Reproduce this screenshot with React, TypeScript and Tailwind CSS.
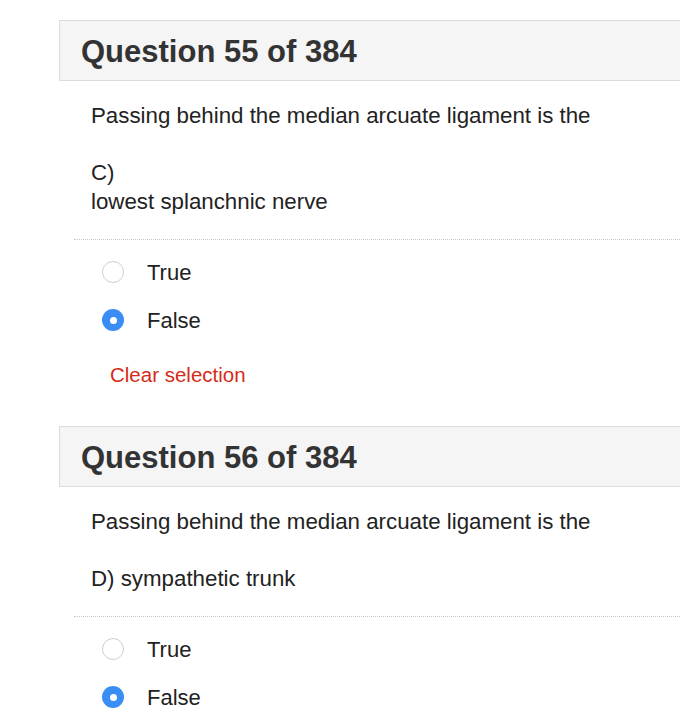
import React from "react";

type Question = {
  number: number;
  total: number;
  stem: string;
  option: React.ReactNode;
  answer: "True" | "False";
  showClear: boolean;
};

const questions: Question[] = [
  {
    number: 55,
    total: 384,
    stem: "Passing behind the median arcuate ligament is the",
    option: (
      <>
        C)
        <br />
        lowest splanchnic nerve
      </>
    ),
    answer: "False",
    showClear: true,
  },
  {
    number: 56,
    total: 384,
    stem: "Passing behind the median arcuate ligament is the",
    option: <>D) sympathetic trunk</>,
    answer: "False",
    showClear: false,
  },
];

function Radio({ checked }: { checked: boolean }) {
  if (checked) {
    return (
      <span className="flex h-[22px] w-[22px] items-center justify-center rounded-full bg-[#3a8ef3]">
        <span className="h-[7px] w-[7px] rounded-full bg-white" />
      </span>
    );
  }
  return <span className="block h-[22px] w-[22px] rounded-full border border-[#cfcfcf] bg-white" />;
}

function QuestionBlock({ q }: { q: Question }) {
  return (
    <div className="mb-[37px]">
      <div className="flex h-[61px] w-[700px] items-center border border-[#dcdcdc] bg-[#f5f5f5] pt-[3px] pl-[21px]">
        <h2 className="text-[31px] font-bold text-[#333]">
          Question {q.number} of {q.total}
        </h2>
      </div>

      <div className="pt-[20px] pl-[32px] text-[22.3px] leading-[29px] text-[#222]">
        <p>{q.stem}</p>
        <p className="mt-[28px]">{q.option}</p>
      </div>

      <div className="mt-[23px] ml-[15px] border-t border-dotted border-[#c8c8c8]">
        <div className="pt-[8px]">
          {(["True", "False"] as const).map((label) => (
            <label key={label} className="flex h-[48px] items-center pl-[28px]">
              <Radio checked={q.answer === label} />
              <span className="ml-[23px] text-[22px] text-[#222]">{label}</span>
            </label>
          ))}
        </div>
        {q.showClear && (
          <button className="mt-[17px] ml-[36px] text-[20.5px] leading-[28px] text-[#d52a19]">
            Clear selection
          </button>
        )}
      </div>
    </div>
  );
}

export default function App() {
  return (
    <div
      className="h-[722px] w-full overflow-hidden bg-white pt-[20px] pl-[59px]"
      style={{ fontFamily: '"Liberation Sans", Arial, sans-serif' }}
    >
      {questions.map((q) => (
        <QuestionBlock key={q.number} q={q} />
      ))}
    </div>
  );
}
